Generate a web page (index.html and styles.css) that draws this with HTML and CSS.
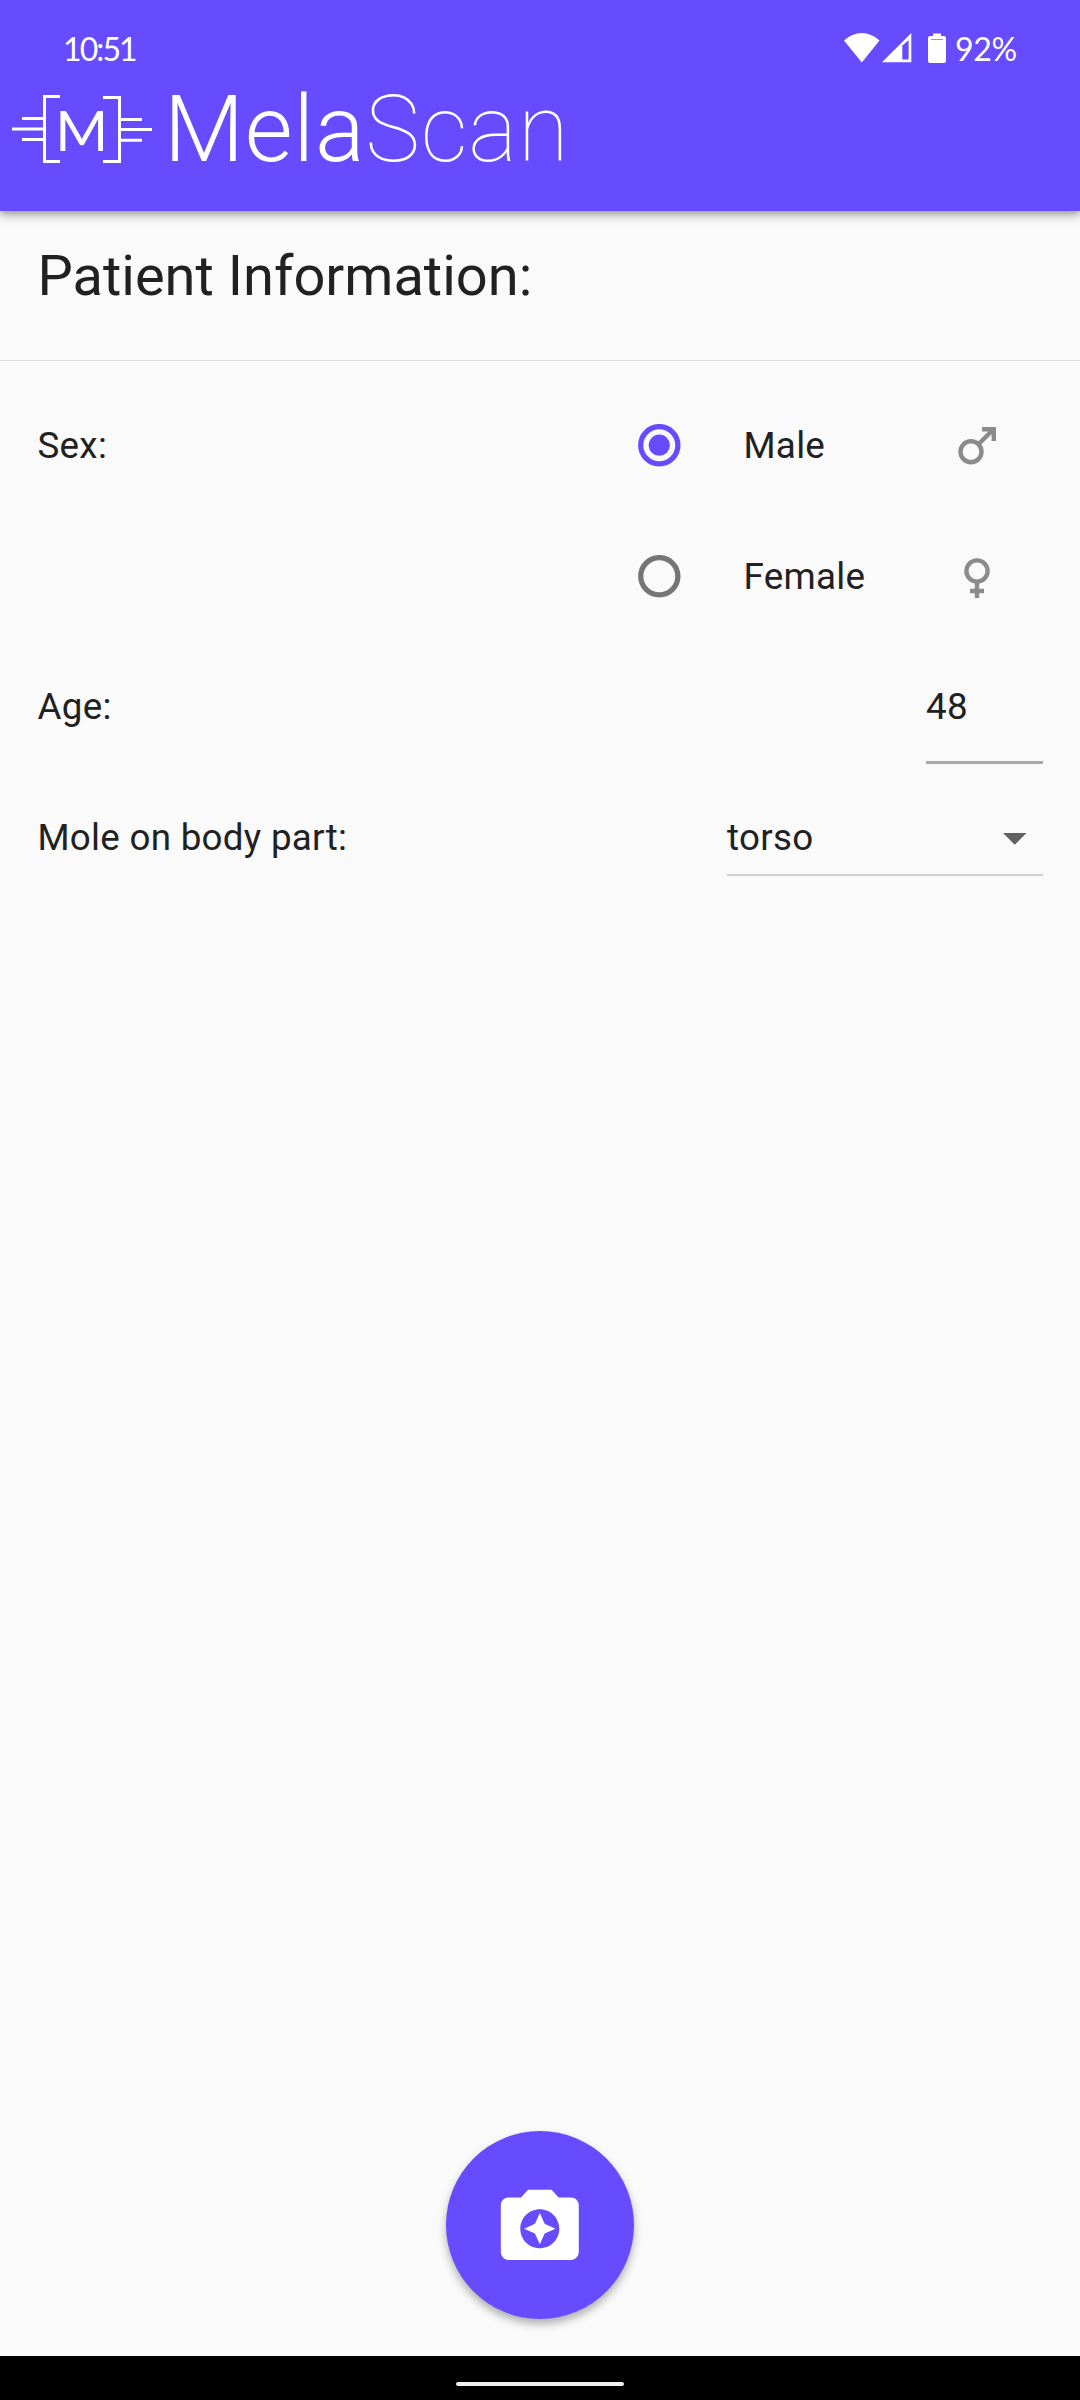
FILE: index.html
```html
<!DOCTYPE html>
<html lang="en">
<head>
<meta charset="utf-8">
<title>MelaScan</title>
<link rel="stylesheet" href="styles.css">
</head>
<body>
<div class="screen">
  <header class="appbar">
    <div class="status">
      <span class="clock">10:51</span>
      <div class="status-icons">
        <svg class="wifi" width="36" height="30" viewBox="0 0 36 30"><path d="M0 7.5Q8 0 17.8 0T35.5 7.5L17.8 29.5Z" fill="#fff"/></svg>
        <svg class="signal" width="30" height="30" viewBox="0 0 30 30"><path d="M0 29.3L29.3 0V29.3ZM20.3 12.5V26.5H26.6V7.3Z" fill="#fff" fill-rule="evenodd"/></svg>
        <svg class="battery" width="18" height="30" viewBox="0 0 18 30"><path d="M5 0.5H13V3H16Q18 3 18 5V28Q18 30 16 30H2Q0 30 0 28V5Q0 3 2 3H5Z" fill="#fff"/><path d="M3 6.5H15" stroke="#9a87ff"/></svg>
        <span class="percent">92%</span>
      </div>
    </div>
    <div class="brand">
      <svg class="mark" width="142" height="70" viewBox="11 94 142 70">
        <g fill="none" stroke="#fff" stroke-width="3">
          <path d="M60 96.5H44.5V161.5H60"/>
          <path d="M103 97.5H119.5V161.5H103"/>
          <path d="M22 118.5H43M12 129H43M22 139.5H43M121 119.5H142M121 129.5H152M121 140.2H142"/>
        </g>
        <text class="mark-letter" x="81.7" y="151" text-anchor="middle">M</text>
      </svg>
      <h1 class="wordmark">Mela<span class="thin">Scan</span></h1>
    </div>
  </header>

  <h2 class="title">Patient Information:</h2>

  <main class="form">
    <div class="row">
      <span class="label">Sex:</span>
      <div class="option">
        <svg class="radio" width="44" height="44" viewBox="-21.3 -21.2 44 44"><circle r="18.6" fill="none" stroke="#674bff" stroke-width="5.25"/><circle r="10.6" fill="#674bff"/></svg>
        <span class="option-label">Male</span>
        <svg class="gender" width="48" height="48" viewBox="953 421 48 48"><g fill="none" stroke="#8b8b8b" stroke-width="4.4"><circle cx="971" cy="450.7" r="10.5"/><path d="M978.5 443.2L993 428.7M982 428.2H993.8V440"/></g></svg>
      </div>
    </div>
    <div class="row">
      <span class="label"></span>
      <div class="option">
        <svg class="radio" width="44" height="44" viewBox="-21.3 -21.2 44 44"><circle r="18.6" fill="none" stroke="#757575" stroke-width="5.25"/></svg>
        <span class="option-label">Female</span>
        <svg class="gender" width="48" height="48" viewBox="953 552 48 48"><g fill="none" stroke="#8b8b8b" stroke-width="4.4"><circle cx="977" cy="570" r="10.6"/><path d="M977 580.5V597M970 590H984"/></g></svg>
      </div>
    </div>
    <div class="row age-row">
      <span class="label">Age:</span>
      <div class="age-field">48</div>
    </div>
    <div class="row">
      <span class="label">Mole on body part:</span>
      <div class="select">
        <span>torso</span>
        <svg width="24" height="12" viewBox="0 0 24 12"><path d="M0 0H23.5L11.75 11.8Z" fill="#616161"/></svg>
      </div>
    </div>
  </main>

  <div class="actions">
    <button class="fab" aria-label="Take photo">
      <svg width="93.6" height="93.6" viewBox="0 0 24 24"><path fill="#fff" d="M9 3L7.17 5H4c-1.1 0-2 .9-2 2v12c0 1.1.9 2 2 2h16c1.1 0 2-.9 2-2V7c0-1.1-.9-2-2-2h-3.17L15 3H9zm3 15c-2.76 0-5-2.24-5-5s2.24-5 5-5 5 2.24 5 5-2.24 5-5 5zm0-1l1.25-2.75L16 13l-2.75-1.25L12 9l-1.25 2.75L8 13l2.75 1.25z"/></svg>
    </button>
  </div>
  <footer class="navbar"><div class="pill"></div></footer>
</div>
</body>
</html>
```
FILE: styles.css
```css
* { box-sizing: border-box; }
body { margin: 0; background: #fafafa; }
svg { display: block; flex: none; }
.screen {
  width: 1080px;
  height: 2400px;
  display: flex;
  flex-direction: column;
  overflow: hidden;
  font-family: Roboto, sans-serif;
  font-size: 36.75px;
  letter-spacing: 0.28px;
  line-height: 44px;
  color: #212121;
}
.appbar {
  height: 211px;
  flex: none;
  background: #674bff;
  color: #fff;
  box-shadow: 0 5px 10px rgba(0, 0, 0, 0.25), 0 2px 6px rgba(0, 0, 0, 0.2);
}
.status {
  height: 82px;
  padding: 33px 64px 0 63px;
  display: flex;
  justify-content: space-between;
  font-family: Lato, sans-serif;
  font-size: 32px;
  line-height: 32px;
}
.clock { letter-spacing: -1.9px; }
.status-icons { display: flex; }
.signal { margin-left: 2px; }
.battery { margin-left: 16px; }
.percent { margin-left: 9px; letter-spacing: -0.3px; width: 61px; white-space: nowrap; }
.brand {
  display: flex;
  align-items: flex-start;
  padding: 12px 0 0 11px;
}
.mark-letter { font-family: Lato, sans-serif; font-size: 57px; letter-spacing: 0; fill: #fff; }
.wordmark {
  margin: -18px 0 0 11px;
  font-size: 92.5px;
  line-height: 108px;
  font-weight: 300;
  letter-spacing: 0.75px;
}
.thin { font-weight: 100; }
.title {
  margin: 0;
  height: 150px;
  flex: none;
  padding: 32px 0 0 37.5px;
  border-bottom: 1px solid #dcdcdc;
  font-size: 56px;
  line-height: 66px;
  font-weight: 400;
  letter-spacing: 0;
}
.form { flex: 1; padding: 19px 37px 0 37.5px; }
.row {
  height: 131px;
  display: flex;
  align-items: center;
  justify-content: space-between;
}
.age-row { height: 130px; }
.option { display: flex; align-items: center; width: 406px; margin-right: -0.5px; }
.option-label { width: 209px; margin-left: 62px; }
.age-field {
  width: 117px;
  height: 114px;
  padding-top: 35px;
  border-bottom: 3px solid #a8a8a8;
}
.select {
  width: 316px;
  height: 76px;
  padding: 2px 16px 0 0;
  border-bottom: 2px solid #d0d0d0;
  display: flex;
  align-items: center;
  justify-content: space-between;
}
.select svg { margin-top: 3px; }
.actions { display: flex; justify-content: center; padding-bottom: 37px; }
.fab {
  width: 188px;
  height: 188px;
  padding: 0;
  border: 0;
  border-radius: 50%;
  background: #674bff;
  display: flex;
  align-items: center;
  justify-content: center;
  box-shadow: 0 5px 9px rgba(0, 0, 0, 0.3);
}
.navbar { height: 44px; background: #000; display: flex; justify-content: center; padding-top: 26px; }
.pill { width: 168px; height: 4px; border-radius: 2px; background: #eee; }
```
